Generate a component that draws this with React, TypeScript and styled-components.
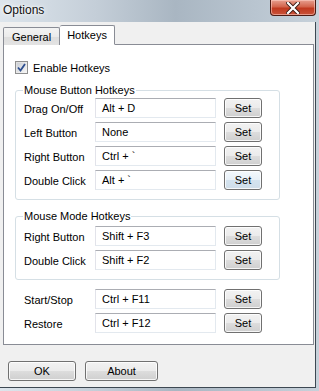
import React, {useState} from 'react';
import styled, {createGlobalStyle} from 'styled-components';

const Global = createGlobalStyle`
  html, body {
    margin: 0;
    padding: 0;
    background: #c9d4de;
  }
  * {
    box-sizing: border-box;
  }
`;

const Frame = styled.div`
  width: 319px;
  height: 391px;
  display: flex;
  flex-direction: column;
  overflow: hidden;
  background: linear-gradient(90deg, #dde5ec 0%, #c4ced8 30%, #a9b6c2 55%, #b9c5d0 80%, #c7d1da 100%);
  font-family: "Liberation Sans", Arial, sans-serif;
  font-size: 11px;
  color: #000;
`;

const TitleBar = styled.div`
  height: 22px;
  flex: none;
  display: flex;
  align-items: flex-start;
  justify-content: space-between;
`;

const Title = styled.div`
  padding: 3px 0 0 3px;
  font-size: 12px;
  color: #111;
  text-shadow: 0 0 6px #fff, 0 0 3px #fff;
`;

const CloseButton = styled.div`
  width: 46px;
  height: 16px;
  margin-right: 3px;
  border: 1px solid #4c1a12;
  border-top: none;
  border-radius: 0 0 4px 4px;
  background: linear-gradient(180deg, #e7a090 0%, #d3644c 45%, #c0391f 55%, #c9533a 100%);
  box-shadow: inset 0 0 0 1px rgba(255, 210, 200, 0.55);
  display: flex;
  align-items: center;
  justify-content: center;
`;

const Client = styled.div`
  flex: 1;
  margin: 0 3px 3px 0;
  background: #f0f0f0;
  border-right: 1px solid #3d4852;
  border-bottom: 1px solid #3d4852;
  padding: 3px 2px 0 3px;
  display: flex;
  flex-direction: column;
`;

const TabStrip = styled.div`
  display: flex;
  align-items: flex-end;
  height: 20px;
  position: relative;
  z-index: 1;
`;

const Tab = styled.div<{ $active?: boolean }>`
  height: ${p => p.$active ? 20 : 18}px;
  padding: 0 ${p => p.$active ? 7 : 8}px;
  border: 1px solid #898c95;
  border-bottom: ${p => p.$active ? '1px solid #fff' : 'none'};
  border-left: ${p => p.$active ? 'none' : '1px solid #898c95'};
  background: ${p => p.$active ? '#fff' : 'linear-gradient(180deg, #f3f3f3 0%, #ebebeb 50%, #dddddd 51%, #e3e3e3 100%)'};
  border-radius: 2px 2px 0 0;
  display: flex;
  align-items: center;
  padding-top: ${p => p.$active ? 0 : 1}px;
`;

const Panel = styled.div`
  margin-top: -1px;
  height: 301px;
  width: 311px;
  background: #fff;
  border: 1px solid #898c95;
  padding: 16px 0 0 11px;
  display: flex;
  flex-direction: column;
`;

const CheckRow = styled.label`
  display: flex;
  align-items: center;
  gap: 5px;
  height: 13px;
  margin-bottom: 10px;
`;

const CheckBox = styled.span`
  width: 13px;
  height: 13px;
  border: 1px solid #8f8f8f;
  background: linear-gradient(135deg, #dcdcdc 0%, #f6f6f6 100%);
  padding: 1px;
  display: flex;
`;

const CheckInner = styled.span`
  flex: 1;
  background: linear-gradient(135deg, #cbcfd5 0%, #f4f4f4 100%);
  display: flex;
  align-items: center;
  justify-content: center;
`;

const Group = styled.fieldset<{ $h: number; $top: number }>`
  margin: 0 0 10px;
  width: 265px;
  height: ${p => p.$h}px;
  border: 1px solid #d5dfe5;
  border-radius: 3px;
  padding: ${p => p.$top}px 0 0 8px;
  display: flex;
  flex-direction: column;
  gap: 5px;
  > legend {
    padding: 0 1px;
    margin-left: -1px;
    line-height: 13px;
  }
`;

const Row = styled.div`
  display: flex;
  align-items: center;
  height: 19px;
`;

const Label = styled.div`
  width: 71px;
  padding-top: 3px;
  white-space: nowrap;
`;

const Field = styled.div`
  width: 121px;
  height: 20px;
  border: 1px solid #e3e9ef;
  border-top-color: #abadb3;
  border-left-color: #e2e3ea;
  background: #fff;
  padding: 1px 0 0 6px;
  display: flex;
  align-items: center;
`;

const Button = styled.button<{ $w: number; $hot?: boolean }>`
  width: ${p => p.$w}px;
  height: 20px;
  margin: 0;
  padding: 0;
  border: 1px solid #707070;
  border-radius: 3px;
  font: inherit;
  color: #000;
  box-shadow: inset 0 0 0 1px rgba(255, 255, 255, 0.8);
  background: ${p => p.$hot
    ? 'linear-gradient(180deg, #f4f9fd 0%, #e7f0f8 50%, #d4e3ef 51%, #cfdde9 100%)'
    : 'linear-gradient(180deg, #f2f2f2 0%, #ebebeb 50%, #dddddd 51%, #cfcfcf 100%)'};
`;

const SetButton = styled(Button)`
  margin-left: 8px;
  margin-top: 1px;
`;

const Loose = styled.div`
  display: flex;
  flex-direction: column;
  gap: 5px;
  padding-left: 9px;
  margin-top: -1px;
`;

const Footer = styled.div`
  display: flex;
  gap: 9px;
  padding: 16px 0 0 5px;
`;

type Hotkey = [string, string];

const mouseButton: Hotkey[] = [
  ['Drag On/Off', 'Alt + D'],
  ['Left Button', 'None'],
  ['Right Button', 'Ctrl + `'],
  ['Double Click', 'Alt + `'],
];
const mouseMode: Hotkey[] = [
  ['Right Button', 'Shift + F3'],
  ['Double Click', 'Shift + F2'],
];
const general: Hotkey[] = [
  ['Start/Stop', 'Ctrl + F11'],
  ['Restore', 'Ctrl + F12'],
];

function HotkeyRow({item, hot}: { item: Hotkey; hot?: boolean }) {
  return (
    <Row>
      <Label>{item[0]}</Label>
      <Field>{item[1]}</Field>
      <SetButton $w={38} $hot={hot}>Set</SetButton>
    </Row>
  );
}

export default function App() {
  const [enabled, setEnabled] = useState(true);
  return (
    <Frame>
      <Global/>
      <TitleBar>
        <Title>Options</Title>
        <CloseButton>
          <svg width="14" height="12" viewBox="0 0 14 12">
            <path d="M2 1 L12 11 M12 1 L2 11" stroke="#3b1a14" strokeWidth="4" strokeLinecap="square"/>
            <path d="M2 1 L12 11 M12 1 L2 11" stroke="#fff" strokeWidth="2.2" strokeLinecap="square"/>
          </svg>
        </CloseButton>
      </TitleBar>
      <Client>
        <TabStrip>
          <Tab>General</Tab>
          <Tab $active>Hotkeys</Tab>
        </TabStrip>
        <Panel>
          <CheckRow onClick={() => setEnabled(!enabled)}>
            <CheckBox>
              <CheckInner>
                {enabled && <svg width="9" height="9" viewBox="0 0 9 9">
                  <path d="M1 4.5 L3.5 7.5 L8 1" fill="none" stroke="#2d4e8f" strokeWidth="1.8"/>
                </svg>}
              </CheckInner>
            </CheckBox>
            Enable Hotkeys
          </CheckRow>
          <Group $h={116} $top={1}>
            <legend>Mouse Button Hotkeys</legend>
            {mouseButton.map((h, i) => <HotkeyRow key={h[0]} item={h} hot={i === 3}/>)}
          </Group>
          <Group $h={70} $top={3}>
            <legend>Mouse Mode Hotkeys</legend>
            {mouseMode.map(h => <HotkeyRow key={h[0]} item={h}/>)}
          </Group>
          <Loose>
            {general.map(h => <HotkeyRow key={h[0]} item={h}/>)}
          </Loose>
        </Panel>
        <Footer>
          <Button $w={68}>OK</Button>
          <Button $w={73}>About</Button>
        </Footer>
      </Client>
    </Frame>
  );
}
